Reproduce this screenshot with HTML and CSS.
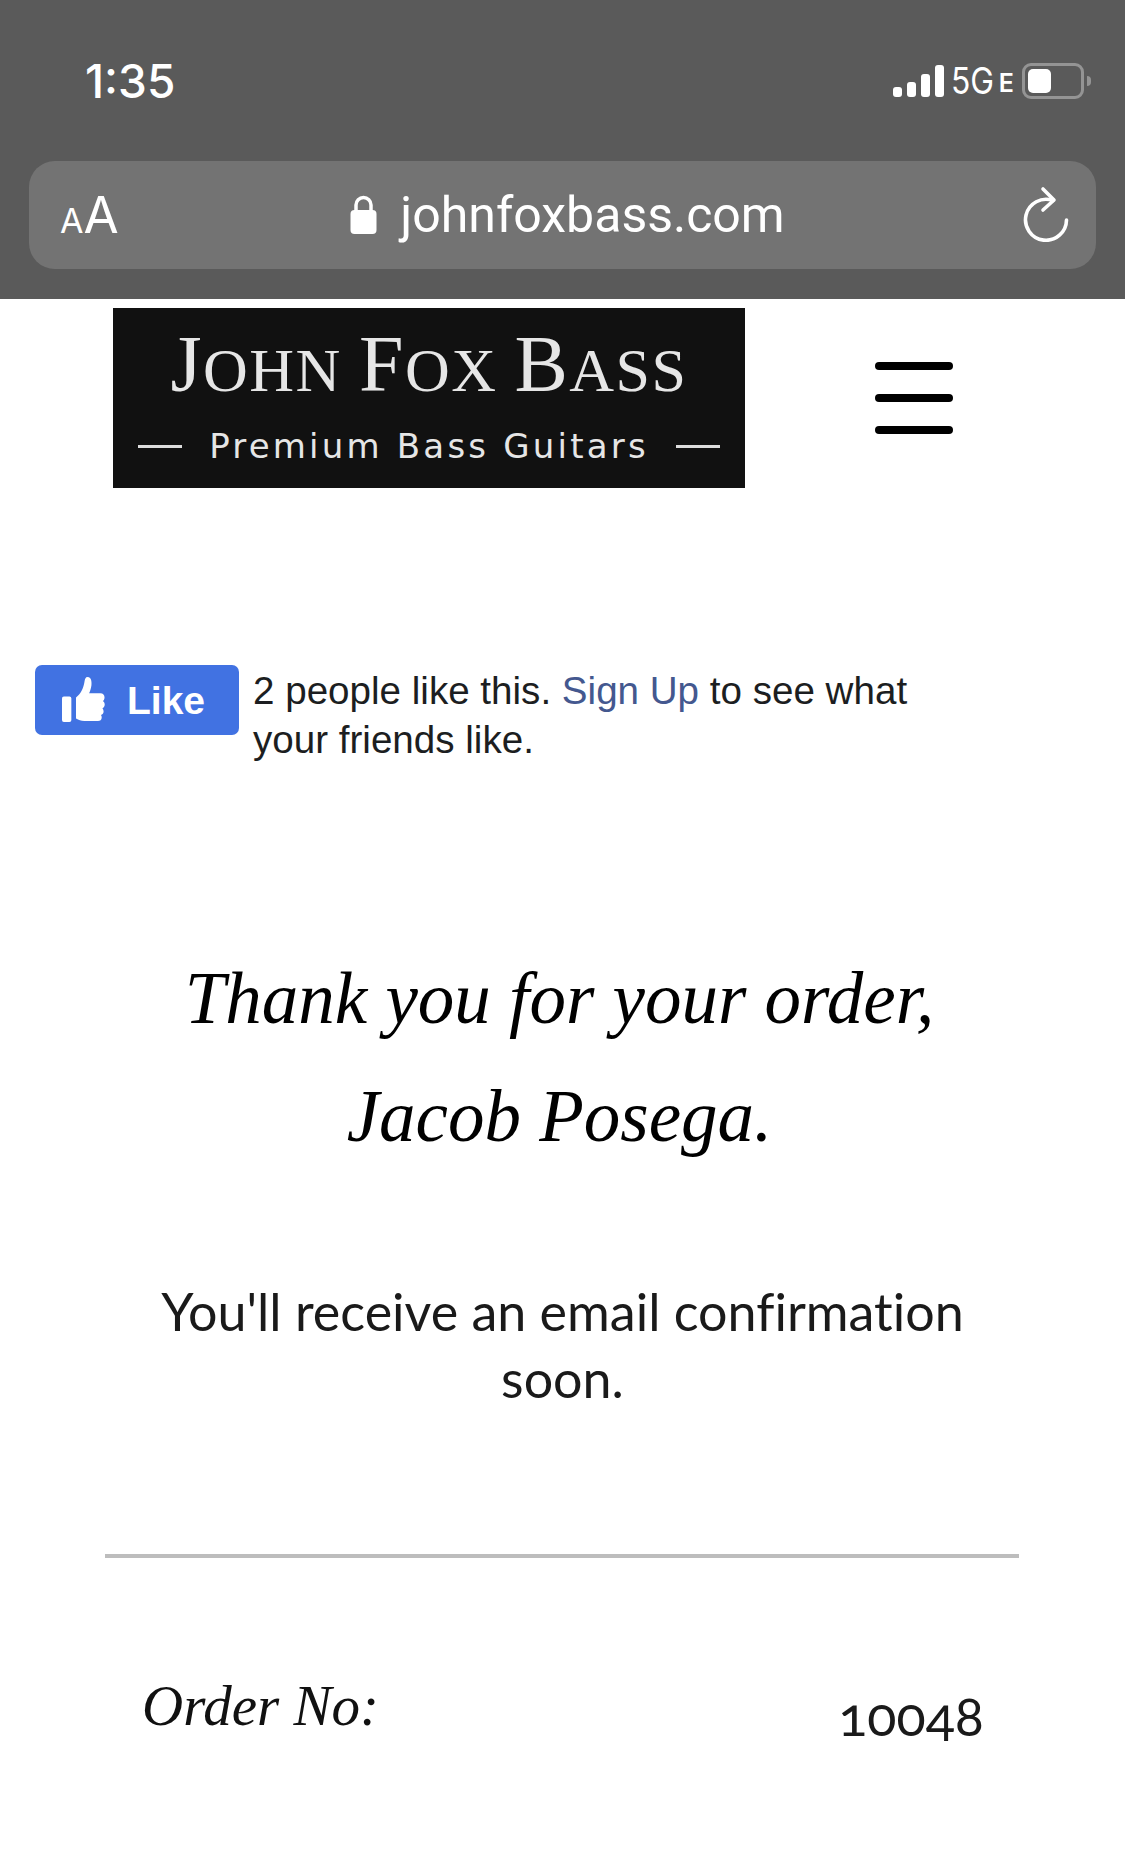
FILE: index.html
```html
<!DOCTYPE html>
<html>
<head>
    <meta charset="utf-8">
    <meta name="viewport" content="width=device-width">
    <title>Thank you</title>
    <link rel="stylesheet" href="styles.css">
</head>
<body>
    <header class="browser">
        <div class="status">
            <span class="time">1:35</span>
            <div class="status-right">
                <div class="signal"><i class="s1"></i><i class="s2"></i><i class="s3"></i><i class="s4"></i></div>
                <span class="net">5G</span><span class="net-e">E</span>
                <div class="battery"><div class="battery-level"></div></div>
                <div class="battery-cap"></div>
            </div>
        </div>
        <div class="urlbar">
            <span class="aa"><small>A</small>A</span>
            <div class="url">
                <svg class="lock" width="27" height="40" viewBox="0 0 27 40">
                    <path d="M6 17V10a7.500 7.500 0 0 1 15 0v7" fill="none" stroke="#fff" stroke-width="3.500"/>
                    <rect x="0.500" y="15" width="26" height="24" rx="4" fill="#fff"/>
                </svg>
                <span>johnfoxbass.com</span>
            </div>
            <svg class="reload" width="46" height="56" viewBox="0 0 46 56">
                <path d="M30 14.500A20.500 20.500 0 1 0 43.500 34" fill="none" stroke="#fff" stroke-width="3.600" stroke-linecap="round"/>
                <path d="M20 3l11 11-11 10" fill="none" stroke="#fff" stroke-width="3.600" stroke-linecap="round" stroke-linejoin="round"/>
            </svg>
        </div>
    </header>

    <div class="site-head">
        <div class="logo">
            <div class="logo-name"><b>J</b>OHN <b>F</b>OX <b>B</b>ASS</div>
            <div class="logo-sub"><i></i><span>Premium Bass Guitars</span><i></i></div>
        </div>
        <div class="burger"><i></i><i></i><i></i></div>
    </div>

    <div class="like-row">
        <div class="like-btn">
            <svg width="43" height="45" viewBox="0 0 46 44" preserveAspectRatio="none">
                <rect x="0" y="19" width="10" height="25" rx="2" fill="#fff"/>
                <path d="M15 20c5-3 8-9 9-15 .5-3 1-5 3.500-5 3.500 0 4.500 4 4 8-.4 3-1.500 6-2.500 8h12c3 0 4.500 2 4.500 4 0 1.500-.7 2.800-1.800 3.500 1.300.8 2 2 2 3.500 0 1.800-1 3-2.500 3.700.8.700 1.300 1.700 1.300 3 0 1.800-1.200 3-2.800 3.500.5.600.8 1.400.8 2.300 0 2.300-1.800 3.500-4 3.500H24c-4 0-6-1-9-2.500z" fill="#fff"/>
            </svg>
            <span>Like</span>
        </div>
        <p class="like-text">2 people like this. <a href="#">Sign Up</a> to see what your friends like.</p>
    </div>

    <h1 class="thanks">Thank you for your order,<br>Jacob Posega.</h1>
    <p class="confirm">You'll receive an email confirmation soon.</p>
    <hr class="rule">
    <div class="order-row">
        <span class="order-label">Order No:</span>
        <span class="order-no">10048</span>
    </div>
</body>
</html>
```

FILE: styles.css
```css
body {
    margin: 0;
    width: 1125px;
    height: 1867px;
    overflow: hidden;
    background-color: #fff;
    font-family: "Liberation Sans", Arial, sans-serif;
}

.browser {
    height: 299px;
    box-sizing: border-box;
    padding: 0 29px;
    background-color: #5a5a5a;
    color: #fff;
}

.status {
    height: 161px;
    box-sizing: border-box;
    padding: 56px 5px 0 56px;
    display: flex;
    justify-content: space-between;
    align-items: flex-start;
}

.time {
    font-family: Inter, sans-serif;
    font-size: 46px;
    font-weight: 500;
    line-height: 50px;
}

.status-right {
    display: flex;
    align-items: center;
    height: 34px;
    margin-top: 8px;
}

.signal {
    display: flex;
    align-items: flex-end;
    gap: 5px;
    height: 32px;
    margin-right: 7px;
}

.signal i {
    width: 9px;
    background-color: #fff;
    border-radius: 3px;
}

.s1 { height: 10px; }
.s2 { height: 15px; }
.s3 { height: 23px; }
.s4 { height: 32px; }

.net {
    font-family: Inter, sans-serif;
    font-size: 37px;
    line-height: 34px;
    transform: scaleX(0.86);
    transform-origin: left;
    width: 48px;
}

.net-e {
    font-family: Inter, sans-serif;
    font-size: 25px;
    font-weight: 600;
    line-height: 34px;
    margin: 4px 8px 0 0;
}

.battery {
    width: 53px;
    height: 30px;
    border: 3px solid #949494;
    border-radius: 9px;
    display: flex;
    align-items: center;
    padding-left: 3px;
}

.battery-level {
    width: 23px;
    height: 24px;
    background-color: #fff;
    border-radius: 5px;
}

.battery-cap {
    width: 4px;
    height: 10px;
    margin-left: 3px;
    background-color: #949494;
    border-radius: 0 5px 5px 0;
}

.urlbar {
    height: 108px;
    box-sizing: border-box;
    padding: 0 27px 0 31px;
    display: flex;
    align-items: center;
    background-color: #737373;
    border-radius: 26px;
}

.aa {
    font-family: Inter, sans-serif;
    font-size: 51px;
    line-height: 50px;
    width: 60px;
    margin-top: 6px;
}

.aa small {
    font-size: 34px;
}

.url {
    flex: 1;
    display: flex;
    align-items: center;
    justify-content: center;
    gap: 23px;
    font-family: Roboto, sans-serif;
    font-size: 50px;
    font-weight: 400;
    margin-right: 8px;
}

.reload {
    margin-top: -2px;
}

.site-head {
    display: flex;
    align-items: center;
    padding: 9px 0 0 113px;
}

.logo {
    width: 632px;
    height: 180px;
    box-sizing: border-box;
    padding-top: 12px;
    background-color: #111;
    color: #e6e6e6;
    text-align: center;
}

.logo-name {
    font-family: "Liberation Serif", serif;
    font-size: 62px;
    line-height: 88px;
    letter-spacing: 1.500px;
}

.logo-name b {
    font-size: 80px;
    font-weight: normal;
}

.logo-sub {
    display: flex;
    align-items: center;
    justify-content: space-between;
    padding: 0 25px;
    margin-top: 10px;
    font-family: "DejaVu Sans", sans-serif;
    font-size: 34px;
    line-height: 44px;
    letter-spacing: 3.200px;
}

.logo-sub i {
    width: 44px;
    height: 3px;
    background-color: #ddd;
}

.burger {
    margin-left: 130px;
    display: flex;
    flex-direction: column;
    gap: 24px;
}

.burger i {
    display: block;
    width: 78px;
    height: 8px;
    background-color: #000;
    border-radius: 4px;
}

.like-row {
    display: flex;
    align-items: flex-start;
    padding: 177px 0 0 35px;
}

.like-btn {
    width: 204px;
    height: 70px;
    box-sizing: border-box;
    padding: 12px 0 0 27px;
    display: flex;
    gap: 22px;
    background-color: #4172e2;
    border-radius: 7px;
    color: #fff;
    font-size: 39px;
    font-weight: bold;
}

.like-btn span {
    line-height: 52px;
    margin-top: -2px;
}

.like-text {
    width: 680px;
    margin: 1px 0 0 14px;
    font-size: 38.600px;
    line-height: 49px;
    color: #1c1e21;
}

.like-text a {
    color: #44588f;
    text-decoration: none;
}

.thanks {
    margin: 176px 0 0;
    padding-right: 6px;
    text-align: center;
    font-family: "Liberation Serif", serif;
    font-size: 73px;
    line-height: 118px;
    font-style: italic;
    font-weight: normal;
    color: #000;
}

.confirm {
    width: 860px;
    margin: 102px auto 0;
    text-align: center;
    font-family: Lato, sans-serif;
    font-size: 52px;
    line-height: 67px;
    font-variant-ligatures: none;
    color: #1a1a1a;
}

.rule {
    width: 914px;
    height: 4px;
    margin: 142px 0 0 105px;
    border: none;
    background-color: #bdbdbd;
}

.order-row {
    display: flex;
    justify-content: space-between;
    align-items: center;
    padding: 105px 141px 0 142px;
}

.order-label {
    font-family: "Liberation Serif", serif;
    font-size: 57px;
    font-style: italic;
    color: #111;
}

.order-no {
    font-family: Lato, sans-serif;
    font-size: 54px;
    font-variant-numeric: oldstyle-nums;
    margin-top: 20px;
    color: #1a1a1a;
}
```
